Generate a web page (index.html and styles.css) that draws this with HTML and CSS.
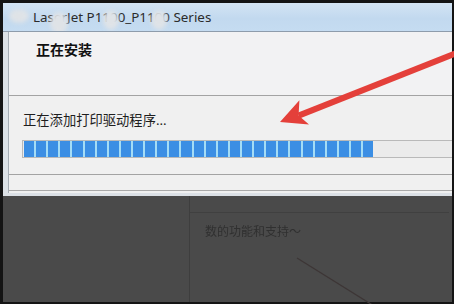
FILE: index.html
```html
<!DOCTYPE html>
<html lang="zh-CN">
<head>
    <meta charset="UTF-8">
    <meta name="viewport" content="width=device-width, initial-scale=1.0">
    <title>正在安装</title>
    <link rel="stylesheet" href="styles.css">
</head>
<body>

    <div class="screen">
        <div class="window">
            <div class="titlebar">
                LaserJet P1100_P1100 Series
                <i class="blob b1"></i>
                <i class="blob b2"></i>
                <i class="blob b3"></i>
                <i class="blob b4"></i>
            </div>
            <div class="frame">
                <div class="panel">
                    <div class="head">
                        <h1>正在安装</h1>
                    </div>
                    <div class="main">
                        <p class="status">正在添加打印驱动程序...</p>
                        <div class="track">
                            <div class="fill">
                                <span></span><span></span><span></span><span></span><span></span>
                                <span></span><span></span><span></span><span></span><span></span>
                                <span></span><span></span><span></span><span></span><span></span>
                                <span></span><span></span><span></span><span></span><span></span>
                                <span></span><span></span><span></span><span></span><span></span>
                                <span></span><span></span><span></span><span></span>
                            </div>
                        </div>
                    </div>
                    <div class="foot"></div>
                </div>
            </div>
        </div>

        <div class="desk">
            <div class="ghost">
                <div class="ghost-top"></div>
                <p class="ghost-text">数的功能和支持～</p>
            </div>
        </div>

        <!-- red pointer drawn over the screenshot -->
        <svg class="marks" width="454" height="304" viewBox="0 0 454 304">
            <line x1="297" y1="258" x2="374" y2="306" stroke="#3d3636" stroke-width="1.3"/>
            <line x1="298.6" y1="115.6" x2="470" y2="47.6" stroke="#e4403a" stroke-width="6"/>
            <polygon points="280,122 299.4,100.3 298.6,115.6 309,124.5" fill="#e4403a"/>
        </svg>
    </div>

</body>
</html>
```

FILE: styles.css
```css
body {
    margin: 0;
    background: #141414;
    font-family: "Noto Sans", "Noto Sans CJK SC", sans-serif;
}
.screen {
    position: relative;
    width: 454px;
    height: 304px;
    box-sizing: border-box;
    padding: 3px 2px 2px 3px;
    display: flex;
    flex-direction: column;
    overflow: hidden;
}
.window {
    height: 193px;
    display: flex;
    flex-direction: column;
}
.titlebar {
    position: relative;
    height: 28px;
    border-bottom: 1px solid #8e9cab;
    background: linear-gradient(180deg, #d3e4f4 0%, #c2d9ef 55%, #c5dcf1 100%);
    display: flex;
    align-items: center;
    padding-left: 30px;
    font-size: 13.4px;
    color: #2b2b2b;
    overflow: hidden;
}
.blob {
    position: absolute;
    border-radius: 50%;
    background: #dfe3e7;
    filter: blur(2px);
}
.b1 { left: 6px; top: 6px; width: 20px; height: 14px; }
.b2 { left: 47px; top: 9px; width: 18px; height: 22px; }
.b3 { left: 100px; top: 7px; width: 16px; height: 20px; }
.b4 { left: 148px; top: 7px; width: 16px; height: 20px; }

.frame {
    flex: 1;
    display: flex;
    background: #dce1e6;
    padding: 0 0 3px 5px;
}
.panel {
    flex: 1;
    display: flex;
    flex-direction: column;
    border-left: 1px solid #a6adb4;
    background: #f0f0f0;
    overflow: hidden;
}
.head {
    height: 64px;
    border-bottom: 1px solid #a3a3a3;
    background: #f2f2f3;
    padding: 8px 0 0 27px;
    box-sizing: border-box;
}
.head h1 {
    margin: 0;
    font-size: 14px;
    line-height: 20px;
    font-weight: bold;
    color: #111;
}
.main {
    height: 79px;
    border-bottom: 1px solid #a3a3a3;
    padding: 16px 0 0 14px;
    box-sizing: border-box;
}
.status {
    margin: 0;
    font-size: 13.3px;
    line-height: 16px;
    color: #1e1e1e;
}
.track {
    margin: 12px 0 0 -1px;
    height: 16px;
    border: 1px solid #b9b9b9;
    border-right: none;
    background: #ebebeb;
    padding-left: 1px;
    display: flex;
}
.fill {
    width: 349px;
    display: flex;
    gap: 2px;
    background: #a4dcf6;
}
.fill span {
    flex: 1;
    background: #3b8ee4;
}
.foot {
    height: 15px;
    border-bottom: 1px solid #a9a9a9;
    background: #f0f0f0;
}

.desk {
    flex: 1;
    display: flex;
    background: #4a4a4a;
    padding-left: 186px;
}
.ghost {
    flex: 1;
    border-left: 1px solid #3e3e3e;
    margin-right: 3px;
}
.ghost-top {
    height: 16px;
    border-bottom: 1px solid #404040;
}
.ghost-text {
    margin: 0;
    padding: 11px 0 0 15px;
    font-size: 12px;
    line-height: 16px;
    color: #303030;
    filter: blur(0.6px);
}
.marks {
    position: absolute;
    left: 0;
    top: 0;
    pointer-events: none;
}
```
